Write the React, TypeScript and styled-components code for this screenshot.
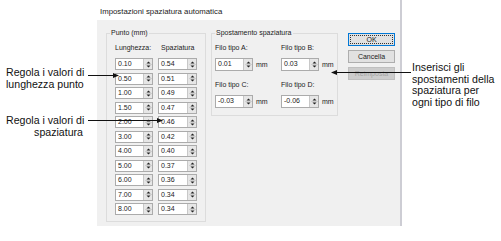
import { Fragment } from "react";
import styled, { createGlobalStyle } from "styled-components";

const GlobalStyle = createGlobalStyle`
    html, body {
        margin: 0;
        padding: 0;
        background: #ffffff;
    }
    body {
        font-family: "Liberation Sans", Arial, sans-serif;
    }
`

const Page = styled.div`
    display: flex;
    height: 241px;
    overflow: hidden;
    position: relative;
    width: 501px;
`

const LeftNotes = styled.div`
    box-sizing: border-box;
    display: flex;
    flex: none;
    flex-direction: column;
    padding: 66px 14px 0 6px;
    width: 97px;
`

const Note = styled.div<{ $align?: "left" | "right"; $top?: number; $lh?: number }>`
    color: #111111;
    font-size: 10.6px;
    line-height: ${p => p.$lh ?? 12}px;
    margin-top: ${p => p.$top ?? 0}px;
    text-align: ${p => p.$align ?? "left"};
    white-space: nowrap;
`

const RightNotes = styled.div`
    flex: 1;
    padding: 62px 0 0 10px;
`

const Dialog = styled.div`
    border-right: 2px solid #cdcdd4;
    box-sizing: border-box;
    display: flex;
    flex: none;
    flex-direction: column;
    height: 226px;
    width: 305px;
`

const TitleBar = styled.div`
    box-sizing: border-box;
    color: #222222;
    font-size: 7.8px;
    height: 20px;
    line-height: 9px;
    padding: 7px 0 0 3px;
`

const Body = styled.div`
    align-items: flex-start;
    background: #f0f0f0;
    display: flex;
    flex: 1;
    padding: 13px 0 0 9px;
`

const Group = styled.div<{ $w: number; $h: number; $ml?: number }>`
    border: 1px solid #dcdcdc;
    box-sizing: border-box;
    flex: none;
    height: ${p => p.$h}px;
    margin-left: ${p => p.$ml ?? 0}px;
    position: relative;
    width: ${p => p.$w}px;
`

const GroupLabel = styled.span`
    background: #f0f0f0;
    color: #222222;
    font-size: 7px;
    left: 3px;
    line-height: 8px;
    padding: 0 1px;
    position: absolute;
    top: -5px;
`

const PuntoGrid = styled.div`
    column-gap: 5px;
    display: grid;
    grid-template-columns: 38px 39px;
    padding: 10px 0 0 8px;
    row-gap: 2.5px;
`

const ColumnHead = styled.div<{ $indent?: number }>`
    color: #222222;
    font-size: 7px;
    line-height: 8px;
    margin-bottom: 3.5px;
    padding-left: ${p => p.$indent ?? 0}px;
`

const SpinBox = styled.div<{ $w: number; $h: number }>`
    background: #ffffff;
    border: 1px solid #ababab;
    box-sizing: border-box;
    display: flex;
    height: ${p => p.$h}px;
    width: ${p => p.$w}px;
`

const SpinValue = styled.span`
    color: #222222;
    flex: 1;
    font-size: 7px;
    line-height: 10px;
    padding-left: 2px;
`

const SpinButtons = styled.div`
    align-items: center;
    background: #e6e6e6;
    border-left: 1px solid #c8c8c8;
    box-sizing: border-box;
    display: flex;
    flex: none;
    justify-content: center;
    width: 9px;
`

const ShiftGrid = styled.div`
    display: grid;
    grid-template-columns: 66px 60px;
    padding: 10px 0 0 3px;
`

const ShiftCell = styled.div<{ $top?: number }>`
    display: flex;
    flex-direction: column;
    gap: 6px;
    margin-top: ${p => p.$top ?? 0}px;
`

const FieldLabel = styled.div`
    color: #222222;
    font-size: 7px;
    line-height: 8px;
`

const FieldRow = styled.div`
    align-items: center;
    display: flex;
    gap: 3px;
`

const Unit = styled.span`
    color: #222222;
    font-size: 7px;
`

const Buttons = styled.div`
    display: flex;
    flex-direction: column;
    gap: 4px;
    margin-left: 10px;
`

const Button = styled.div<{ $primary?: boolean; $disabled?: boolean }>`
    background: ${p => (p.$disabled ? "#cccccc" : "#e1e1e1")};
    border: 1px solid ${p => (p.$primary ? "#0078d7" : p.$disabled ? "#bfbfbf" : "#adadad")};
    box-sizing: border-box;
    color: ${p => (p.$disabled ? "#a3a3a3" : "#222222")};
    font-size: 7px;
    height: 13px;
    line-height: 11px;
    outline: ${p => (p.$primary ? "1px dotted #333" : "none")};
    outline-offset: -3px;
    text-align: center;
    width: 47px;
`

const Leaders = styled.svg`
    left: 0;
    pointer-events: none;
    position: absolute;
    top: 0;
`

const Arrows = () => (
    <svg width="7" height="9" viewBox="0 0 7 9">
        <path d="M3.5 1.5 L5.5 3.5 L1.5 3.5 Z" fill="#222" />
        <line x1="0" y1="4.5" x2="7" y2="4.5" stroke="#cfcfcf" strokeWidth="1" />
        <path d="M1.5 5.5 L5.5 5.5 L3.5 7.5 Z" fill="#222" />
    </svg>
)

const Spin = ({ value, w, h }: { value: string; w: number; h: number }) => (
    <SpinBox $w={w} $h={h}>
        <SpinValue>{value}</SpinValue>
        <SpinButtons>
            <Arrows />
        </SpinButtons>
    </SpinBox>
)

const rows = [
    ["0.10", "0.54"],
    ["0.50", "0.51"],
    ["1.00", "0.49"],
    ["1.50", "0.47"],
    ["2.00", "0.46"],
    ["3.00", "0.42"],
    ["4.00", "0.40"],
    ["5.00", "0.37"],
    ["6.00", "0.36"],
    ["7.00", "0.34"],
    ["8.00", "0.34"],
]

const shifts = [
    { label: "Filo tipo A:", value: "0.01" },
    { label: "Filo tipo B:", value: "0.03" },
    { label: "Filo tipo C:", value: "-0.03" },
    { label: "Filo tipo D:", value: "-0.06" },
]

const App = () => {
    return (
        <>
            <GlobalStyle />
            <Page>
                <LeftNotes>
                    <Note>Regola i valori di<br />lunghezza punto</Note>
                    <Note $align="right" $top={24}>Regola i valori di<br />spaziatura</Note>
                </LeftNotes>
                <Dialog>
                    <TitleBar>Impostazioni spaziatura automatica</TitleBar>
                    <Body>
                        <Group $w={100} $h={189}>
                            <GroupLabel>Punto (mm)</GroupLabel>
                            <PuntoGrid>
                                <ColumnHead>Lunghezza:</ColumnHead>
                                <ColumnHead $indent={3}>Spaziatura</ColumnHead>
                                {rows.map(([len, gap], i) => (
                                    <Fragment key={i}>
                                        <Spin value={len} w={38} h={12} />
                                        <Spin value={gap} w={39} h={12} />
                                    </Fragment>
                                ))}
                            </PuntoGrid>
                        </Group>
                        <Group $w={127} $h={83} $ml={5}>
                            <GroupLabel>Spostamento spaziatura</GroupLabel>
                            <ShiftGrid>
                                {shifts.map((s, i) => (
                                    <ShiftCell key={s.label} $top={i > 1 ? 10 : 0}>
                                        <FieldLabel>{s.label}</FieldLabel>
                                        <FieldRow>
                                            <Spin value={s.value} w={38} h={13} />
                                            <Unit>mm</Unit>
                                        </FieldRow>
                                    </ShiftCell>
                                ))}
                            </ShiftGrid>
                        </Group>
                        <Buttons>
                            <Button $primary>OK</Button>
                            <Button>Cancella</Button>
                            <Button $disabled>Reimposta</Button>
                        </Buttons>
                    </Body>
                </Dialog>
                <RightNotes>
                    <Note $lh={11.7}>
                        Inserisci gli<br />spostamenti della<br />spaziatura per<br />ogni tipo di filo
                    </Note>
                </RightNotes>
                <Leaders width="501" height="241" viewBox="0 0 501 241">
                    <line x1="88" y1="75.5" x2="115" y2="75.5" stroke="#111" strokeWidth="1" />
                    <path d="M119 75.5 L113 73 L113 78 Z" fill="#111" />
                    <line x1="88" y1="120.5" x2="159" y2="120.5" stroke="#111" strokeWidth="1" />
                    <path d="M163 120.5 L157 118 L157 123 Z" fill="#111" />
                    <line x1="336" y1="72.5" x2="411" y2="72.5" stroke="#111" strokeWidth="1" />
                    <path d="M331 72.5 L337 70 L337 75 Z" fill="#111" />
                </Leaders>
            </Page>
        </>
    )
}

export default App;
